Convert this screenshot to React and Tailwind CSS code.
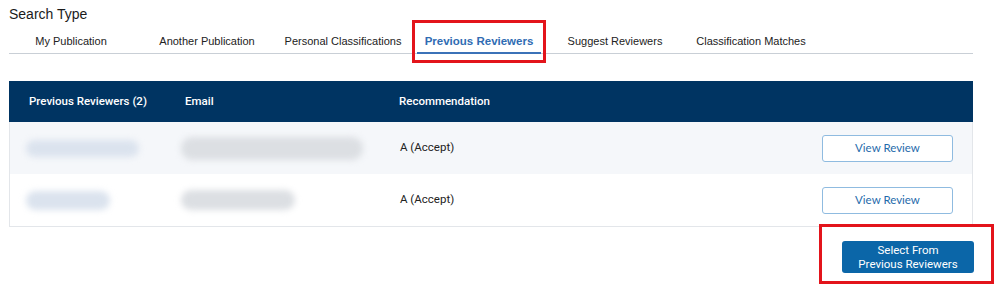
import React from "react";

const tabs = [
  "My Publication",
  "Another Publication",
  "Personal Classifications",
  "Previous Reviewers",
  "Suggest Reviewers",
  "Classification Matches",
];

function Row({ bg, nameW, nameH, emailW, emailH }) {
  return (
    <div className={`flex items-center h-[52px] ${bg}`}>
      <div className="w-[166px] pl-[16px] flex items-center">
        <div className={`${nameW} ${nameH} rounded-full bg-[#dbe3ee] blur-[3px]`} />
      </div>
      <div className="w-[204px] pl-[5px] flex items-center">
        <div className={`${emailW} ${emailH} rounded-full bg-[#dcdfe3] blur-[3px]`} />
      </div>
      <div className="flex-1 pl-[20px] text-[11.5px] text-[#222]">A (Accept)</div>
      <div className="pr-[19px]">
        <button className="w-[131px] h-[27px] rounded-[3px] border border-[#8fbbe0] bg-white text-[#1f6bab] text-[11.5px] font-['Lato',sans-serif]">
          View Review
        </button>
      </div>
    </div>
  );
}

export default function App() {
  return (
    <div className="relative w-[994px] h-[284px] bg-white font-['Roboto',sans-serif] text-[#1b1b1b]">
      <div className="pl-[9px] pt-[4px] text-[14px] leading-[20px] font-['Liberation_Sans',sans-serif]">
        Search Type
      </div>
      <div className="mt-[6px] ml-[9px] w-[964px] border-b border-[#c9cfd6] flex h-[24px] font-['Liberation_Sans',sans-serif]">
        <div className="flex -ml-[6px]">
          {tabs.map((t, i) => (
            <div key={t} className="w-[136px] relative flex justify-center pt-[5px] leading-[13px]">
              {i === 3 ? (
                <span className="text-[11.5px] font-bold text-[#2f6cb3]">{t}</span>
              ) : (
                <span className="text-[11px] text-[#222]">{t}</span>
              )}
              {i === 3 && (
                <div className="absolute left-[6px] right-[6px] -bottom-[1px] h-[2px] bg-[#3b72b8]" />
              )}
            </div>
          ))}
        </div>
      </div>

      <div className="mt-[27px] ml-[9px] w-[964px] border-x border-b border-[#e3e6ea]">
        <div className="flex items-center h-[41px] bg-[#003462] text-white text-[11.5px] font-medium -mx-px">
          <div className="w-[176px] pl-[20px]">Previous Reviewers (2)</div>
          <div className="w-[214px]">Email</div>
          <div className="flex-1">Recommendation</div>
        </div>
        <Row bg="bg-[#f5f7fa]" nameW="w-[113px]" nameH="h-[17px]" emailW="w-[182px]" emailH="h-[23px]" />
        <Row bg="bg-white" nameW="w-[84px]" nameH="h-[19px]" emailW="w-[114px]" emailH="h-[20px]" />
      </div>

      <div className="flex justify-end w-[974px] mt-[14px]">
        <button className="w-[132px] h-[32px] rounded-[3px] bg-[#0b66a8] text-white text-[11.5px] leading-[14px]">
          Select From
          <br />
          Previous Reviewers
        </button>
      </div>

      <div className="absolute left-[412px] top-[20px] w-[134px] h-[43px] border-[3px] border-[#e3141b]" />
      <div className="absolute left-[819px] top-[224px] w-[175px] h-[60px] border-[3px] border-[#e3141b]" />
    </div>
  );
}
